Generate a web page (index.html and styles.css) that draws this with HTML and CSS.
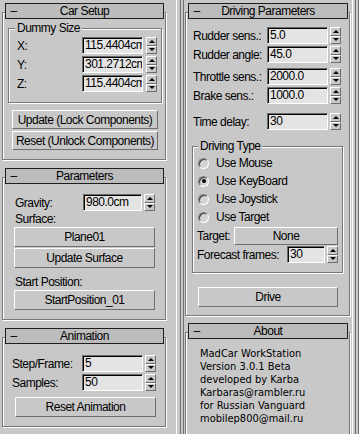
FILE: index.html
```html
<!DOCTYPE html>
<html lang="en">
<head>
    <meta charset="UTF-8">
    <meta name="viewport" content="width=device-width, initial-scale=1.0">
    <title>MadCar WorkStation</title>
    <link rel="stylesheet" href="styles.css">
</head>
<body>
    <div class="column column-left">
        <!-- Car Setup -->
        <div class="rollout first">
            <div class="rollout-head"><span class="toggle">–</span><span class="title">Car Setup</span><span></span></div>
            <div class="group group-dummy">
                <div class="group-label">Dummy Size</div>
                <div class="field field-dummy">
                    <label>X:</label>
                    <div class="edit">115.4404cm</div>
                    <div class="spin"><span class="up"></span><span class="down"></span></div>
                </div>
                <div class="field field-dummy">
                    <label>Y:</label>
                    <div class="edit">301.2712cm</div>
                    <div class="spin"><span class="up"></span><span class="down"></span></div>
                </div>
                <div class="field field-dummy">
                    <label>Z:</label>
                    <div class="edit">115.4404cm</div>
                    <div class="spin"><span class="up"></span><span class="down"></span></div>
                </div>
            </div>
            <button class="btn btn-lock">Update (Lock Components)</button>
            <button class="btn btn-unlock">Reset (Unlock Components)</button>
        </div>

        <!-- Parameters -->
        <div class="rollout">
            <div class="rollout-head"><span class="toggle">–</span><span class="title">Parameters</span><span></span></div>
            <div class="field field-gravity">
                <label>Gravity:</label>
                <div class="edit">980.0cm</div>
                <div class="spin"><span class="up"></span><span class="down"></span></div>
            </div>
            <div class="caption">Surface:</div>
            <button class="btn btn-wide">Plane01</button>
            <button class="btn btn-wide">Update Surface</button>
            <div class="caption caption-start">Start Position:</div>
            <button class="btn btn-wide">StartPosition_01</button>
        </div>

        <!-- Animation -->
        <div class="rollout">
            <div class="rollout-head"><span class="toggle">–</span><span class="title">Animation</span><span></span></div>
            <div class="field field-anim first-row">
                <label>Step/Frame:</label>
                <div class="edit">5</div>
                <div class="spin"><span class="up"></span><span class="down"></span></div>
            </div>
            <div class="field field-anim">
                <label>Samples:</label>
                <div class="edit">50</div>
                <div class="spin"><span class="up"></span><span class="down"></span></div>
            </div>
            <button class="btn btn-reset">Reset Animation</button>
        </div>
    </div>

    <div class="rail rail-mid"></div>

    <div class="column column-right">
        <!-- Driving Parameters -->
        <div class="rollout first rollout-drive">
            <div class="rollout-head"><span class="toggle">–</span><span class="title">Driving Parameters</span><span></span></div>
            <div class="field field-drive row-rudder">
                <label>Rudder sens.:</label>
                <div class="edit">5.0</div>
                <div class="spin"><span class="up"></span><span class="down"></span></div>
            </div>
            <div class="field field-drive">
                <label>Rudder angle:</label>
                <div class="edit">45.0</div>
                <div class="spin"><span class="up"></span><span class="down"></span></div>
            </div>
            <div class="field field-drive row-throttle">
                <label>Throttle sens.:</label>
                <div class="edit">2000.0</div>
                <div class="spin"><span class="up"></span><span class="down"></span></div>
            </div>
            <div class="field field-drive">
                <label>Brake sens.:</label>
                <div class="edit">1000.0</div>
                <div class="spin"><span class="up"></span><span class="down"></span></div>
            </div>
            <div class="field field-drive row-delay">
                <label>Time delay:</label>
                <div class="edit">30</div>
                <div class="spin"><span class="up"></span><span class="down"></span></div>
            </div>

            <div class="group group-type">
                <div class="group-label">Driving Type</div>
                <div class="radio-row first-row"><span class="radio"></span>Use Mouse</div>
                <div class="radio-row"><span class="radio checked"></span>Use KeyBoard</div>
                <div class="radio-row"><span class="radio"></span>Use Joystick</div>
                <div class="radio-row"><span class="radio"></span>Use Target</div>
                <div class="target-row">
                    <label>Target:</label>
                    <button class="btn btn-target">None</button>
                </div>
                <div class="field field-forecast">
                    <label>Forecast frames:</label>
                    <div class="edit">30</div>
                    <div class="spin"><span class="up"></span><span class="down"></span></div>
                </div>
            </div>
            <button class="btn btn-drive">Drive</button>
        </div>

        <!-- About -->
        <div class="rollout rollout-about">
            <div class="rollout-head"><span class="toggle">–</span><span class="title">About</span><span></span></div>
            <div class="about">
                <div>MadCar WorkStation</div>
                <div>Version 3.0.1 Beta</div>
                <div>developed by Karba</div>
                <div>Karbaras@rambler.ru</div>
                <div>for Russian Vanguard</div>
                <div>mobilep800@mail.ru</div>
            </div>
        </div>
    </div>

    <div class="rail rail-right"></div>
</body>
</html>
```

FILE: styles.css
```css
* {
    box-sizing: border-box;
}
body {
    margin: 0;
    background-color: #c8c8c8;
    font-family: "Liberation Sans", Arial, sans-serif;
    font-size: 12px;
    letter-spacing: -0.5px;
    color: #000;
    display: flex;
    height: 434px;
    overflow: hidden;
}

/* columns and scroll rails */
.column {
    display: flex;
    flex-direction: column;
    flex: none;
}
.column-left {
    width: 168px;
}
.column-right {
    width: 167px;
}
.rail {
    flex: none;
    height: 100%;
}
.rail-mid {
    width: 16px;
    background: linear-gradient(to right,
        transparent 8px, #fff 8px, #fff 9px, transparent 9px,
        transparent 12px, #6e6e6e 12px, #6e6e6e 13px, transparent 13px,
        transparent 15px, #6e6e6e 15px, #6e6e6e 16px, transparent 16px);
}
.rail-right {
    width: 8px;
    background: linear-gradient(to right,
        transparent 1px, #fff 1px, #fff 2px, transparent 2px,
        transparent 4px, #6e6e6e 4px, #6e6e6e 5px, transparent 5px,
        transparent 7px, #6e6e6e 7px, #6e6e6e 8px, transparent 8px);
}

/* rollouts */
.rollout {
    margin: 17px 2px 0 2px;
    border: 1px solid #787878;
    box-shadow: inset 1px 1px 0 #fff, 1px 1px 0 #fff;
    padding-bottom: 9px;
}
.rollout.first {
    margin-top: 12px;
}
.column-right .rollout {
    margin-left: 1px;
    margin-right: 1px;
}
.rollout-drive {
    padding-bottom: 8px;
}
.rollout-about {
    margin-top: 16px;
    flex: 1;
}
.rollout-head {
    margin: -10px 1px 0 2px;
    height: 16px;
    border: 1px solid #1e1e1e;
    background-color: #bcbcbc;
    display: grid;
    grid-template-columns: 15px 1fr 15px;
    align-items: center;
    line-height: 14px;
}
.toggle {
    text-align: center;
}
.title {
    text-align: center;
}

/* group boxes */
.group {
    border: 1px solid #787878;
    box-shadow: inset 1px 1px 0 #fff, 1px 1px 0 #fff;
}
.group-label {
    width: fit-content;
    margin: -7px 0 0 6px;
    padding: 0 2px;
    line-height: 13px;
    background-color: #c8c8c8;
}
.group-dummy {
    margin: 9px 3px 0 5px;
    padding-bottom: 10px;
}
.group-type {
    margin: 16px 6px 0 6px;
    padding-bottom: 9px;
}
.group-type .group-label {
    margin-left: 5px;
}

/* spinner fields */
.field {
    display: flex;
    align-items: center;
    height: 17px;
    margin-top: 2px;
}
.field label {
    flex: none;
}
.edit {
    flex: none;
    height: 17px;
    padding: 1px 0 0 2px;
    line-height: 13px;
    background-color: #e4e4e4;
    border: 1px solid;
    border-color: #6b6b6b #fff #fff #6b6b6b;
    box-shadow: inset 1px 1px 0 #000;
    overflow: hidden;
    white-space: nowrap;
}
.spin {
    flex: none;
    width: 11px;
    height: 17px;
    margin-left: 2px;
    display: flex;
    flex-direction: column;
}
.spin span {
    flex: 1;
    border: 1px solid;
    border-color: #fff #6e6e6e #6e6e6e #fff;
    display: flex;
    align-items: center;
    justify-content: center;
}
.spin .up::after {
    content: "";
    border-left: 3px solid transparent;
    border-right: 3px solid transparent;
    border-bottom: 3px solid #000;
}
.spin .down::after {
    content: "";
    border-left: 3px solid transparent;
    border-right: 3px solid transparent;
    border-top: 3px solid #000;
}

.field-dummy {
    padding-left: 8px;
}
.field-dummy label {
    width: 65px;
}
.field-dummy .edit {
    width: 61px;
}
.field-dummy .spin {
    margin-left: 3px;
}

.field-gravity {
    margin-top: 10px;
    padding-left: 12px;
}
.field-gravity label {
    width: 68px;
}
.field-gravity .edit {
    width: 59px;
}

.field-anim {
    padding-left: 9px;
}
.field-anim.first-row {
    margin-top: 11px;
}
.field-anim label {
    width: 70px;
}
.field-anim .edit {
    width: 61px;
}

.field-drive {
    padding-left: 7px;
}
.field-drive label {
    width: 74px;
}
.field-drive .edit {
    width: 61px;
}
.row-rudder {
    margin-top: 8px;
}
.row-throttle {
    margin-top: 5px;
}
.row-delay {
    margin-top: 9px;
}

.field-forecast {
    margin-top: 1px;
    padding-left: 4px;
}
.field-forecast label {
    width: 90px;
}
.field-forecast .edit {
    width: 38px;
}

.caption {
    margin: 2px 0 0 12px;
    line-height: 13px;
}
.caption-start {
    margin-top: 8px;
}

/* buttons */
.btn {
    display: block;
    height: 20px;
    padding: 0;
    font: inherit;
    letter-spacing: inherit;
    color: #000;
    background-color: #c8c8c8;
    border: 1px solid;
    border-color: #fff #6e6e6e #6e6e6e #fff;
}
.btn-lock {
    margin: 7px 0 0 9px;
    width: 146px;
    height: 19px;
}
.btn-unlock {
    margin: 2px 0 0 9px;
    width: 146px;
    height: 19px;
}
.btn-wide {
    margin: 1px 0 0 11px;
    width: 141px;
}
.btn-reset {
    margin: 6px 0 0 12px;
    width: 141px;
}
.btn-drive {
    margin: 14px 0 0 12px;
    width: 140px;
}

/* radio buttons */
.radio-row {
    display: flex;
    align-items: center;
    height: 18px;
    padding-left: 5px;
}
.radio-row.first-row {
    margin-top: 1px;
}
.radio {
    width: 11px;
    height: 11px;
    margin-right: 7px;
    border-radius: 50%;
    border: 1px solid;
    border-color: #808080 #fff #fff #808080;
    background-color: #d4d4d4;
    box-shadow: inset 1px 1px 0 #404040;
    display: flex;
    align-items: center;
    justify-content: center;
}
.radio.checked::after {
    content: "";
    width: 4px;
    height: 4px;
    border-radius: 50%;
    background-color: #000;
}

.target-row {
    display: flex;
    align-items: center;
    margin-top: 1px;
    padding-left: 4px;
}
.target-row label {
    width: 37px;
}
.btn-target {
    width: 104px;
    height: 18px;
}

/* about text */
.about {
    margin-top: 8px;
    padding-left: 14px;
    font-family: "DejaVu Sans Condensed", "DejaVu Sans", sans-serif;
    font-size: 11px;
    letter-spacing: 0;
    line-height: 13px;
}
```
